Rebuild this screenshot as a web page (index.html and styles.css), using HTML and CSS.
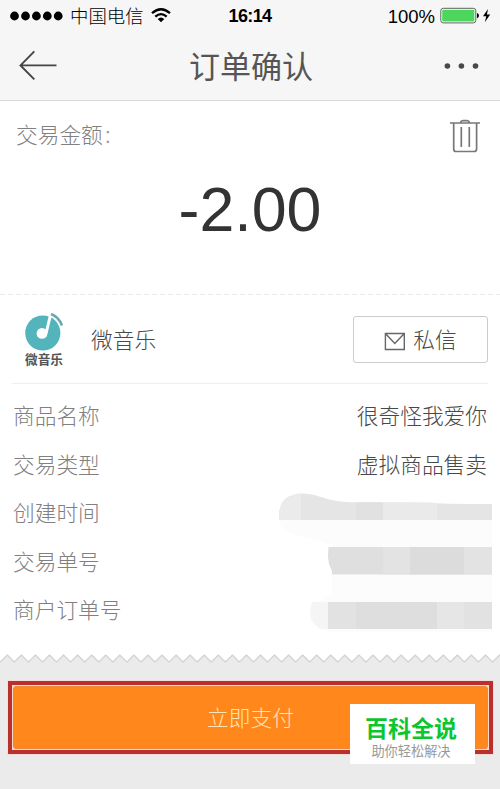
FILE: index.html
```
<!DOCTYPE html>
<html lang="zh-CN">
<head>
<meta charset="utf-8">
<title>订单确认</title>
<link rel="stylesheet" href="styles.css">
</head>
<body>
<header class="header">
  <div class="status">
    <div class="status-left">
      <svg width="54" height="10" viewBox="0 0 54 10"><circle cx="4.5" cy="5" r="4.4"/><circle cx="15.5" cy="5" r="4.4"/><circle cx="26.4" cy="5" r="4.4"/><circle cx="37.3" cy="5" r="4.4"/><circle cx="48.2" cy="5" r="4.4"/></svg>
      <span class="carrier">中国电信</span>
      <svg class="wifi" width="20" height="15" viewBox="0 0 20 15"><g fill="none" stroke="#000" stroke-width="2.3"><path d="M1 5.2Q10-2.8 19 5.2"/><path d="M4.3 8.7Q10 3.6 15.7 8.7"/></g><path d="M6.7 11Q10 8 13.3 11L10 14.3Z"/></svg>
    </div>
    <span class="clock">16:14</span>
    <div class="status-right">
      <span class="percent">100%</span>
      <svg width="51" height="18" viewBox="0 0 51 18"><rect x=".8" y="1.3" width="35" height="14.6" rx="2.5" fill="#fff" stroke="#596459" stroke-width="1"/><rect x="2.2" y="2.7" width="32.2" height="11.8" rx="1" fill="#4cd65d"/><path d="M37 6Q39 6.5 39 8.6T37 11.2Z"/><path d="M48 2L43 9.3H46.3L44.8 15.2L50.2 7.6H46.9Z"/></svg>
    </div>
  </div>
  <nav class="nav">
    <svg width="40" height="32" viewBox="0 0 40 32"><path d="M16.3 1.3L2.5 15.4L16.3 29.4M2.5 15.4H38.5" fill="none" stroke="#444" stroke-width="1.9"/></svg>
    <h1 class="title">订单确认</h1>
    <svg width="36" height="8" viewBox="0 0 36 8" fill="#484848"><circle cx="3.4" cy="4" r="2.8"/><circle cx="17.4" cy="4" r="2.8"/><circle cx="31.5" cy="4" r="2.8"/></svg>
  </nav>
</header>
<main class="receipt">
  <section class="amount">
    <div class="amount-head">
      <span>交易金额<span class="colon">:</span></span>
      <svg width="32" height="34" viewBox="0 0 32 34" fill="none" stroke="#777" stroke-width="1.7"><path d="M1 4H31M11.5 3.5Q12 1.6 14 1.6H18Q20 1.6 20.5 3.5M4.7 4V30Q4.7 32.5 7 32.5H25Q27.6 32.5 27.6 30V4M12.3 8V28M20.3 8V28"/></svg>
    </div>
    <div class="amount-value">-2.00</div>
  </section>
  <svg class="dashes" width="500" height="2"><path d="M0 .5H500" stroke="#e9e9e9" stroke-width="1" stroke-dasharray="5 3"/></svg>
  <section class="merchant">
    <div class="logo">
      <svg width="40" height="40" viewBox="0 0 40 40"><circle cx="18.8" cy="21" r="17.6" fill="#54b4bb"/><circle cx="18" cy="21.4" r="5.4" fill="#fff"/><path d="M26.5 3L22 21.5" stroke="#fff" stroke-width="3"/><path d="M27 2Q35 5 38 13.5" fill="none" stroke="#fff" stroke-width="5"/><path d="M27 2Q35 5 38 13.5" fill="none" stroke="#6aa9ad" stroke-width="2.5"/></svg>
      <span class="logo-text">微音乐</span>
    </div>
    <span class="merchant-name">微音乐</span>
    <div class="message">
      <svg width="22" height="19" viewBox="0 0 22 19" fill="none" stroke="#666" stroke-width="1.4"><path d="M1.4 1.5H20.3V17.5H1.4ZM1.4 1.5L10.8 11.5L20.3 1.5"/></svg>
      <span>私信</span>
    </div>
  </section>
  <section class="details">
    <div class="labels"><span>商品名称</span><span>交易类型</span><span>创建时间</span><span>交易单号</span><span>商户订单号</span></div>
    <div class="values">
      <span>很奇怪我爱你</span><span>虚拟商品售卖</span>
      <svg class="masked" width="214" height="140" viewBox="278 492 214 140">
        <path d="M279 520H492V632H330L322 629Q310 625 310 614T319 602L332 592V545Q310 538 298 536Q280 530 279 520Z" fill="#fcfcfc"/>
        <path d="M279 520V514Q280 494 303 493.5C321 494 326 503 360 502.3L429 502.5Q440 504 492 504V520Z" fill="#e5e5e5"/>
        <path d="M279 520V514Q280 497 301 493.5V520Z" fill="#ebebeb"/>
        <path d="M356 502.3H383V520H356Z" fill="#e1e1e1"/><path d="M383 502.5L437 503V520H383Z" fill="#eaeaea"/>
        <path d="M328.5 547H492V574.5H332V571Q328 564 328 555Z" fill="#dfdfdf"/>
        <path d="M383 547H410V574.5H383ZM464 547H492V574.5H464Z" fill="#e3e3e3"/><path d="M410 547H464V574.5H410Z" fill="#dcdcdc"/>
        <path d="M312 602H328V629H320Q310 622 310 612Z" fill="#f5f5f5"/>
        <path d="M328 602H492V629H328Z" fill="#e2e2e2"/><path d="M356 602H437V629H356Z" fill="#dedede"/><path d="M437 602H464V629H437Z" fill="#e6e6e6"/>
      </svg>
    </div>
  </section>
</main>
<svg class="torn" width="500" height="9" viewBox="0 0 500 9"><defs><pattern id="teeth" x=".3" width="14.063" height="9" patternUnits="userSpaceOnUse"><path d="M0 0H14.063V8L7.03 1L0 8Z" fill="#fff"/><path d="M-1 7L0 8L7.03 1L14.063 8L15 7" fill="none" stroke="#cdcdcd" stroke-width="1.2"/></pattern></defs><rect width="500" height="9" fill="url(#teeth)"/></svg>
<footer class="footer">
  <div class="pay-frame"><div class="pay">立即支付</div></div>
  <aside class="badge"><strong>百科全说</strong><span>助你轻松解决</span></aside>
</footer>
</body>
</html>
```
FILE: styles.css
```
* { box-sizing: border-box; }
body {
  margin: 0;
  width: 500px;
  height: 789px;
  overflow: hidden;
  display: flex;
  flex-direction: column;
  background: #ebebeb;
  font-family: "Liberation Sans", "Noto Sans CJK SC", sans-serif;
  font-size: 21.7px;
  font-weight: 300;
  color: #484848;
}
svg { display: block; flex: none; }
.header { height: 101px; background: #f6f6f6; border-bottom: 1px solid #dadada; }
.status {
  display: grid;
  grid-template-columns: 200px 100px 200px;
  align-items: center;
  height: 32px;
  color: #000;
}
.status-left { display: flex; align-items: center; padding-left: 10px; }
.carrier { font-size: 18.4px; line-height: 32px; margin-left: 6px; padding-top: 1px; margin-bottom: -1px; white-space: nowrap; }
.wifi { margin-left: 7px; margin-top: -1px; }
.clock { text-align: center; font-size: 18px; font-weight: 700; letter-spacing: -.6px; padding-top: 1px; }
.status-right { display: flex; align-items: center; justify-content: flex-end; padding-right: 9px; gap: 5px; }
.percent { font-size: 18.5px; font-weight: 400; padding-top: 1px; }
.nav { display: flex; justify-content: space-between; align-items: center; height: 68px; padding: 0 20px 0 18px; }
.title { margin: 0; padding-top: 3px; font-size: 31px; font-weight: 400; line-height: 60px; color: #555; }
.receipt { height: 553px; flex: none; background: #fff; }
.amount { height: 193px; }
.amount-head { display: flex; justify-content: space-between; align-items: center; height: 68px; padding: 0 19px 0 16px; color: #808080; }
.amount-head > span { margin-top: -4px; }
.amount-head svg { margin-top: 2px; }
.colon { margin-left: 2px; color: #999; }
.amount-value { font-size: 62.7px; line-height: 80px; font-weight: 400; text-align: center; color: #333; }
.merchant { display: flex; align-items: center; height: 88px; margin: 0 12px; border-bottom: 1px solid #eee; }
.logo { width: 40px; margin-left: 12px; flex: none; }
.logo-text { display: block; padding-left: 1px; padding-top: 1px; font-size: 12.7px; line-height: 15px; font-weight: 700; color: #555; white-space: nowrap; }
.merchant-name { margin-left: 27px; margin-top: -3px; }
.message {
  margin-left: auto;
  display: flex;
  align-items: center;
  justify-content: center;
  gap: 7px;
  width: 135px;
  height: 47px;
  border: 1px solid #ccc;
  border-radius: 3px;
}
.message span { margin-top: -3px; }
.message svg { margin-top: 3px; }
.details { display: flex; justify-content: space-between; padding: 9px 8px 0 13px; }
.labels, .values { display: flex; flex-direction: column; line-height: 48.5px; }
.labels { color: #808080; }
.values { width: 214px; text-align: right; }
.values span { padding-right: 5px; }
.masked { margin-top: 2px; }
.footer { position: relative; flex: 1; padding: 18px 7px 0 8px; }
.pay-frame { height: 73px; padding: 1px; border: 4px solid #bb302c; background: #f9ddcc; outline: 1px solid #f5dddd; }
.pay { height: 100%; border: 1px solid #e88a3b; border-radius: 3px; background: #ff871b; color: #ffe5b2; text-align: center; line-height: 64px; }
.badge {
  position: absolute;
  left: 350px;
  top: 41px;
  width: 125px;
  height: 60px;
  background: #fff;
  display: flex;
  flex-direction: column;
  align-items: center;
  padding: 12px 3px 0 0;
}
.badge strong { font-size: 23px; line-height: 27px; font-weight: 700; color: #0cc52f; }
.badge span { font-size: 13.2px; line-height: 17px; font-weight: 400; color: #999; }
```
